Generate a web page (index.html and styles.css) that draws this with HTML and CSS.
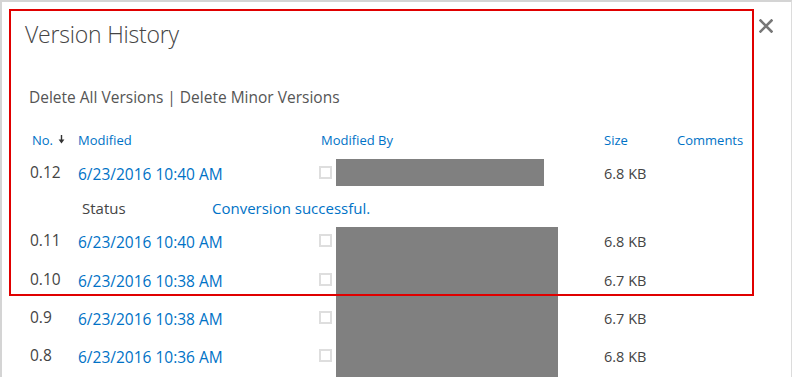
FILE: index.html
```html
<!DOCTYPE html>
<html>
<head>
<meta charset="utf-8">
<link rel="stylesheet" href="styles.css">
</head>
<body>
<div class="dialog">
  <button class="close" aria-label="Close">
    <svg width="14" height="14" viewBox="0 0 14 14"><path d="M1.5 1.5 L12.5 12.5 M12.5 1.5 L1.5 12.5" stroke="#777" stroke-width="2.6" stroke-linecap="square"/></svg>
  </button>
  <div class="content">
    <h1 class="title">Version History</h1>
    <div class="actions"><span>Delete All Versions</span> | <span>Delete Minor Versions</span></div>
    <div class="versions">
      <div class="row head">
        <div class="c-no">No.<svg class="arrow" width="7" height="9" viewBox="0 0 7 9"><path d="M3.5 0 V5" stroke="#333" stroke-width="1.4"/><path d="M0.6 4.4 H6.4 L3.5 8.6 Z" fill="#333"/></svg></div>
        <div class="c-date">Modified</div>
        <div class="c-by">Modified By</div>
        <div class="c-size">Size</div>
        <div class="c-com">Comments</div>
      </div>
      <div class="row short">
        <div class="c-no">0.12</div>
        <div class="c-date link">6/23/2016 10:40 AM</div>
        <div class="c-by"><span class="chk"></span><span class="name"></span></div>
        <div class="c-size">6.8 KB</div>
        <div class="c-com"></div>
      </div>
      <div class="row short status">
        <div class="s-label">Status</div>
        <div class="s-value">Conversion successful.</div>
      </div>
      <div class="row tall">
        <div class="c-no">0.11</div>
        <div class="c-date link">6/23/2016 10:40 AM</div>
        <div class="c-by"><span class="chk"></span></div>
        <div class="c-size">6.8 KB</div>
        <div class="c-com"></div>
      </div>
      <div class="row">
        <div class="c-no">0.10</div>
        <div class="c-date link">6/23/2016 10:38 AM</div>
        <div class="c-by"><span class="chk"></span></div>
        <div class="c-size">6.7 KB</div>
        <div class="c-com"></div>
      </div>
      <div class="row">
        <div class="c-no">0.9</div>
        <div class="c-date link">6/23/2016 10:38 AM</div>
        <div class="c-by"><span class="chk"></span></div>
        <div class="c-size">6.7 KB</div>
        <div class="c-com"></div>
      </div>
      <div class="row">
        <div class="c-no">0.8</div>
        <div class="c-date link">6/23/2016 10:36 AM</div>
        <div class="c-by"><span class="chk"></span></div>
        <div class="c-size">6.8 KB</div>
        <div class="c-com"></div>
      </div>
    </div>
  </div>
  <div class="redact"></div>
  <div class="highlight"></div>
</div>
</body>
</html>
```
FILE: styles.css
```css
html, body {
  margin: 0;
  padding: 0;
  background: #fff;
}
body {
  font-family: "Open Sans", "Noto Sans", "Liberation Sans", sans-serif;
  color: #444;
}
.dialog {
  position: relative;
  box-sizing: border-box;
  width: 792px;
  height: 377px;
  overflow: hidden;
  border-top: 2px solid #d4d4d4;
  border-left: 2px solid #d4d4d4;
  border-right: 1px solid #dcdcdc;
  background: #fff;
}
.close {
  position: absolute;
  top: 17px;
  left: 757px;
  width: 14px;
  height: 14px;
  padding: 0;
  border: 0;
  background: none;
}
.close svg { display: block; }
.content {
  padding: 0 0 0 23px;
}
.title {
  margin: 0;
  padding-top: 17px;
  font-size: 23px;
  font-weight: 300;
  line-height: 30px;
  color: #444;
  letter-spacing: -0.2px;
}
.actions {
  margin-top: 38px;
  padding-left: 4px;
  font-size: 15.5px;
  line-height: 20px;
  color: #555;
}
.versions {
  margin-top: 23px;
  font-size: 15px;
  line-height: 20px;
}
.row {
  display: flex;
  align-items: flex-start;
  box-sizing: border-box;
  height: 38px;
  padding-top: 9px;
}
.row.short { height: 34px; }
.row.tall { height: 39px; }
.row.head {
  height: 25px;
  padding-top: 0;
  font-size: 13px;
  color: #0072c6;
}
.row.head .c-no {
  padding-left: 7px;
  margin-top: 0;
  display: flex;
  align-items: center;
  height: 20px;
  font-size: 13px;
}
.row.head .c-by { padding-left: 2px; box-sizing: border-box; }
.arrow {
  display: block;
  margin-left: 5px;
  margin-top: -2px;
}
.c-no {
  width: 53px;
  padding-left: 5px;
  box-sizing: border-box;
  flex: none;
  margin-top: -2px;
  font-size: 15.5px;
}
.c-date { width: 241px; flex: none; }
.link { color: #0072c6; font-size: 15.5px; }
.c-by { width: 285px; flex: none; display: flex; align-items: flex-start; }
.c-size { width: 73px; flex: none; font-size: 14.5px; }
.row.head .c-size { font-size: 13px; }
.c-com { flex: 1; }
.chk {
  width: 9px;
  height: 9px;
  margin-top: 2px;
  border: 2px solid #dedede;
  flex: none;
}
.name {
  display: block;
  width: 208px;
  height: 27px;
  margin-left: 4px;
  margin-top: -5px;
  background: #808080;
}
.s-label { width: 130px; padding-left: 57px; flex: none; }
.s-value { color: #0072c6; }
.redact {
  position: absolute;
  left: 334px;
  top: 225px;
  width: 222px;
  height: 160px;
  background: #808080;
}
.highlight {
  position: absolute;
  left: 7px;
  top: 7px;
  width: 741px;
  height: 283px;
  border: 2px solid #e00000;
  pointer-events: none;
}
```
